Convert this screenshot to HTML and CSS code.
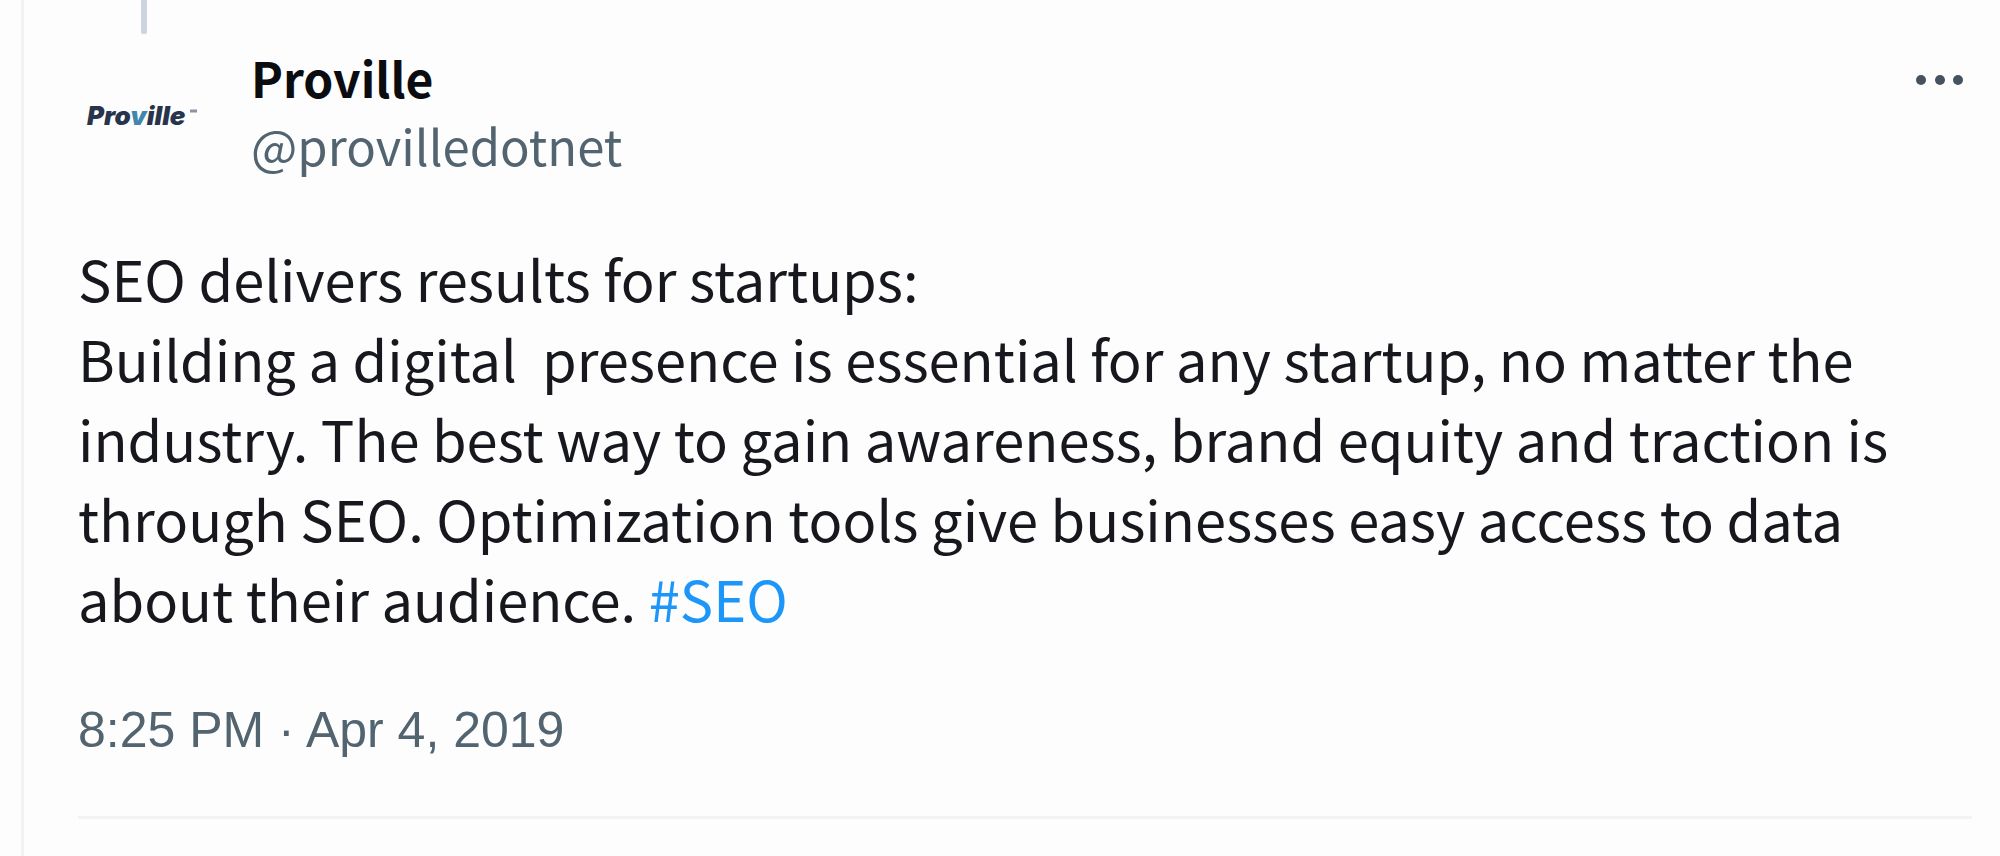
FILE: index.html
```
<!DOCTYPE html>
<html lang="en">
<head>
    <meta charset="UTF-8">
    <title>Proville on Twitter</title>
    <meta name="viewport" content="width=device-width, initial-scale=1.0">
    <link rel="stylesheet" href="styles.css">
</head>
<body>
    <article class="tweet">
        <div class="thread-line"></div>
        <header class="tweet-header">
            <a class="avatar" href="#" aria-label="Proville">
                <svg width="128" height="128" viewBox="0 0 128 128">
                    <text class="logo-text" x="9" y="73">Pro<tspan class="logo-v">v</tspan>ille</text>
                    <path d="M112 59h7" stroke="#8b93a0" stroke-width="3"/>
                </svg>
            </a>
            <div class="user">
                <a class="name" href="#">Proville</a>
                <a class="handle" href="#">@provilledotnet</a>
            </div>
            <button class="more-btn" aria-label="More">
                <svg width="48" height="12" viewBox="0 0 48 12">
                    <circle cx="5" cy="6" r="5"/>
                    <circle cx="24" cy="6" r="5"/>
                    <circle cx="42" cy="6" r="5"/>
                </svg>
            </button>
        </header>
        <p class="tweet-text">SEO delivers results for startups:
Building a digital  presence is essential for any startup, no matter the industry. The best way to gain awareness, brand equity and traction is through SEO. Optimization tools give businesses easy access to data about their audience. <a href="#">#SEO</a></p>
        <div class="tweet-date"><a href="#">8:25 PM · Apr 4, 2019</a></div>
    </article>
</body>
</html>
```
FILE: styles.css
```
* {
    box-sizing: border-box;
}
body {
    background: #fdfdfe;
    color: #17181d;
    font-family: 'Noto Sans CJK SC', 'Noto Sans', sans-serif;
    margin: 0;
}
a {
    text-decoration: none;
    color: inherit;
}
.tweet {
    min-height: 100vh;
    margin-left: 21px;
    padding: 0 28px 0 54px;
    border-left: 3px solid #f3f1f6;
}
.thread-line {
    width: 6px;
    height: 34px;
    margin-left: 63px;
    background: #cdd3e1;
    border-radius: 0 0 2px 2px;
}
.tweet-header {
    display: flex;
    align-items: flex-start;
    padding-top: 10px;
}
.avatar {
    width: 128px;
    height: 128px;
    margin-top: 8px;
    border-radius: 50%;
}
.avatar svg {
    display: block;
}
.logo-text {
    font-family: 'Inter', sans-serif;
    font-size: 26px;
    font-weight: 900;
    font-style: italic;
    fill: #27344c;
}
.logo-v {
    fill: #3f87ac;
}
.user {
    display: flex;
    flex-direction: column;
    flex: 1;
    margin-left: 45px;
    font-size: 48px;
    line-height: 67px;
}
.name {
    color: #0b0c10;
    font-weight: 700;
}
.handle {
    color: #536471;
    font-size: 49px;
}
.more-btn {
    margin-top: 30px;
    margin-right: 8px;
    padding: 0;
    border: none;
    background: none;
    cursor: pointer;
}
.more-btn svg {
    display: block;
    fill: #46535f;
}
.tweet-text {
    margin: 58px 0 0 0;
    font-size: 56px;
    line-height: 80px;
    white-space: pre-wrap;
}
.tweet-text a {
    color: #1d96fa;
}
.tweet-date {
    padding: 56px 0 50px 0;
    border-bottom: 3px solid #f3f2f5;
    color: #536471;
    font-family: 'Liberation Sans', Arial, sans-serif;
    font-size: 50px;
    line-height: 72px;
}
```
